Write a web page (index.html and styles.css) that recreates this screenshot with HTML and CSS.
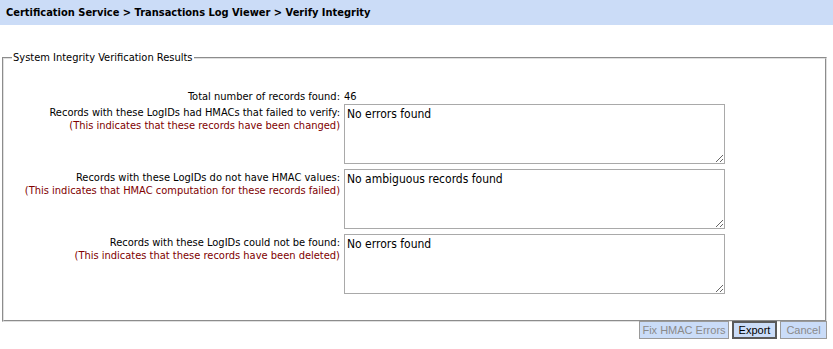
FILE: index.html
```html
<!DOCTYPE html>
<html lang="en">
<head>
    <meta charset="UTF-8">
    <title>Verify Integrity</title>
    <link rel="stylesheet" href="styles.css">
</head>
<body>

<div class="crumbs">Certification Service &gt; Transactions Log Viewer &gt; Verify Integrity</div>

<fieldset class="results">
    <legend>System Integrity Verification Results</legend>

    <div class="grid">
        <div class="label total">Total number of records found:</div>
        <div class="value total">46</div>

        <div class="label">
            Records with these LogIDs had HMACs that failed to verify:<br>
            <span class="hint">(This indicates that these records have been changed)</span>
        </div>
        <textarea class="box" readonly>No errors found</textarea>

        <div class="label">
            Records with these LogIDs do not have HMAC values:<br>
            <span class="hint">(This indicates that HMAC computation for these records failed)</span>
        </div>
        <textarea class="box" readonly>No ambiguous records found</textarea>

        <div class="label">
            Records with these LogIDs could not be found:<br>
            <span class="hint">(This indicates that these records have been deleted)</span>
        </div>
        <textarea class="box" readonly>No errors found</textarea>
    </div>
</fieldset>

<div class="actions">
    <button class="fix" disabled>Fix HMAC Errors</button>
    <button class="export">Export</button>
    <button class="cancel" disabled>Cancel</button>
</div>

</body>
</html>
```

FILE: styles.css
```css
/* Page */
body {
    margin: 0;
    font-family: "DejaVu Sans Condensed", "DejaVu Sans", Tahoma, sans-serif;
    font-stretch: condensed;
    font-size: 11px;
    color: #000;
    background: #fff;
}

/* Breadcrumb bar */
.crumbs {
    height: 25px;
    line-height: 25px;
    padding-left: 6px;
    background-color: #cbdcf7;
    font-weight: bold;
    font-size: 11px;
}

/* Results frame */
.results {
    margin: 26px 6px 0 2px;
    padding: 25px 0 26px 0;
    border: 2px groove #e0e0e0;
}

.results legend {
    margin-left: 8px;
    padding: 0 1px;
    font-size: 11px;
}

.grid {
    display: grid;
    grid-template-columns: 336px 381px;
    column-gap: 4px;
    row-gap: 5px;
}

.label {
    text-align: right;
    line-height: 13px;
    padding-top: 2px;
}

.total {
    padding-top: 1px;
    margin-bottom: -4px;
}

.value {
    line-height: 13px;
}

.hint {
    color: #800000;
}

.box {
    box-sizing: border-box;
    height: 60px;
    margin: 0;
    padding: 2px 2px;
    border: 1px solid #a9a9a9;
    font-family: "DejaVu Sans Condensed", "DejaVu Sans", Tahoma, sans-serif;
    font-stretch: condensed;
    font-size: 12px;
    line-height: 15px;
    resize: vertical;
}

/* Buttons under the frame */
.actions {
    display: flex;
    justify-content: flex-end;
    gap: 3px;
    margin: -1px 6px 0 0;
}

.actions button {
    height: 18px;
    padding: 0;
    font-family: "Liberation Sans", Arial, sans-serif;
    font-size: 11px;
    background-color: #cadcf8;
    border: 1px solid #9a9a9a;
    color: #000;
}

.actions button:disabled {
    color: #8a8a8a;
}

.actions .fix {
    width: 90px;
}

.actions .export {
    width: 45px;
    border: 2px solid #5a5a5a;
}

.actions .cancel {
    width: 47px;
}
```
